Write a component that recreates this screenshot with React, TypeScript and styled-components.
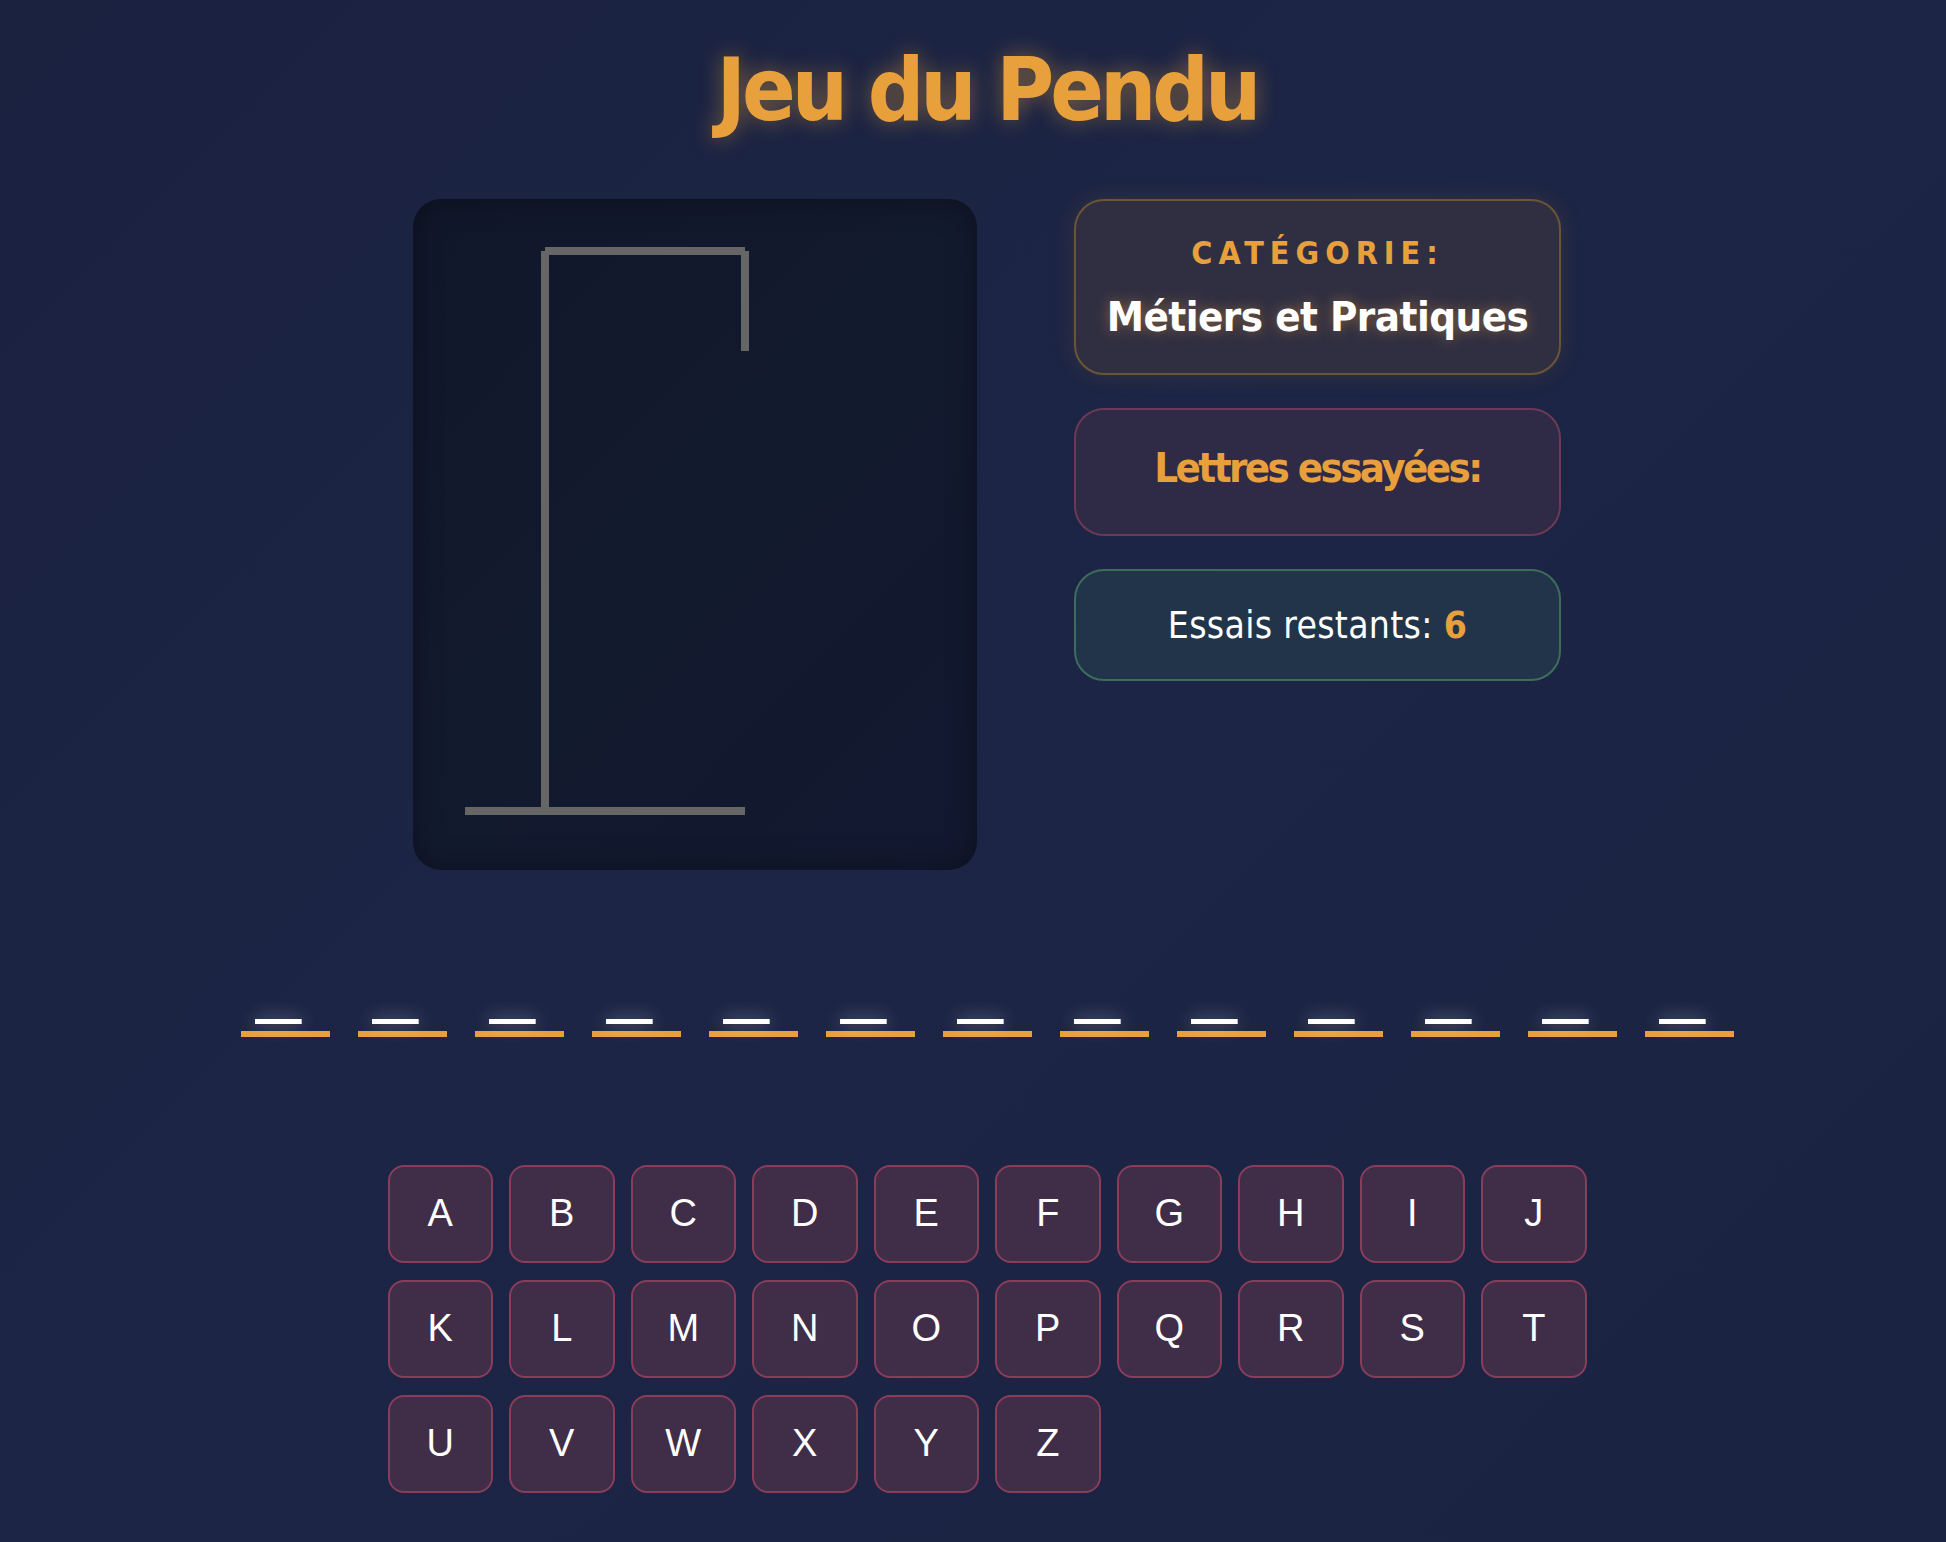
import React from "react";
import styled, { createGlobalStyle } from "styled-components";

const GlobalStyle = createGlobalStyle`
    html, body {
        margin: 0;
        padding: 0;
    }
    body {
        min-height: 100vh;
        background: linear-gradient(135deg, #1b2240 0%, #1c2545 45%, #1a2341 100%);
        font-family: "DejaVu Sans Condensed", "DejaVu Sans", sans-serif;
        color: #ffffff;
    }
`

const ORANGE = "#e8a03c";

const word = "_____________".split("");
const alphabet = "ABCDEFGHIJKLMNOPQRSTUVWXYZ".split("");

type CardTone = "orange" | "rose" | "green";

export default function App() {
    return (
        <>
            <GlobalStyle/>
            <Page>
                <Title>Jeu du Pendu</Title>
                <GameArea>
                    <Gallows>
                        <svg width="500" height="600" viewBox="0 0 250 300">
                            <line x1="10" y1="290" x2="150" y2="290"/>
                            <line x1="50" y1="290" x2="50" y2="10"/>
                            <line x1="50" y1="10" x2="150" y2="10"/>
                            <line x1="150" y1="10" x2="150" y2="60"/>
                        </svg>
                    </Gallows>
                    <InfoColumn>
                        <InfoCard $tone="orange">
                            <CategoryLabel>Catégorie:</CategoryLabel>
                            <CategoryValue>Métiers et Pratiques</CategoryValue>
                        </InfoCard>
                        <InfoCard $tone="rose" $extraBottom={10}>
                            <TriedTitle>Lettres essayées:</TriedTitle>
                        </InfoCard>
                        <InfoCard $tone="green">
                            <Remaining>Essais restants: <strong>6</strong></Remaining>
                        </InfoCard>
                    </InfoColumn>
                </GameArea>
                <WordRow>
                    {word.map((c, i) => (
                        <Blank key={i}>{c}</Blank>
                    ))}
                </WordRow>
                <Keyboard>
                    {alphabet.map((l) => (
                        <Key key={l}>{l}</Key>
                    ))}
                </Keyboard>
            </Page>
        </>
    );
}

const Page = styled.div`
    display: flex;
    flex-direction: column;
    align-items: center;
    padding: 0 0 40px 28px;
`

const Title = styled.h1`
    margin: 37px 0 56px;
    font-size: 88px;
    line-height: 1.2;
    font-weight: bold;
    letter-spacing: -4px;
    color: ${ORANGE};
    text-shadow: 0 0 22px rgba(232, 160, 60, 0.45);
`

const GameArea = styled.div`
    display: flex;
    align-items: flex-start;
    gap: 97px;
`

const Gallows = styled.div`
    width: 564px;
    height: 671px;
    box-sizing: border-box;
    padding: 32px;
    border-radius: 28px;
    background: linear-gradient(135deg, #11172a 0%, #121a2e 50%, #121830 100%);
    box-shadow: inset 0 0 30px rgba(0, 0, 0, 0.35);

    svg {
        display: block;
    }

    line {
        stroke: #666666;
        stroke-width: 4;
        stroke-linecap: butt;
    }
`

const InfoColumn = styled.div`
    width: 487px;
    display: flex;
    flex-direction: column;
    gap: 33px;
`

const tones = {
    orange: {bg: "#302f42", border: "#6b5536", glow: "rgba(232, 160, 60, 0.12)"},
    rose: {bg: "#2f2a45", border: "#6c3a56", glow: "rgba(0, 0, 0, 0)"},
    green: {bg: "#22344a", border: "#3d6e5b", glow: "rgba(0, 0, 0, 0)"},
};

const InfoCard = styled.div<{ $tone: CardTone; $extraBottom?: number }>`
    box-sizing: border-box;
    padding: 33px 20px ${(p) => 31 + (p.$extraBottom || 0)}px;
    border: 2px solid ${(p) => tones[p.$tone].border};
    border-radius: 30px;
    background: ${(p) => tones[p.$tone].bg};
    box-shadow: 0 0 24px ${(p) => tones[p.$tone].glow};
    text-align: center;
`

const CategoryLabel = styled.div`
    font-size: 32px;
    line-height: 1.2;
    font-weight: bold;
    letter-spacing: 6px;
    text-transform: uppercase;
    color: ${ORANGE};
`

const CategoryValue = styled.div`
    margin-top: 20px;
    font-size: 41.6px;
    line-height: 1.2;
    font-weight: bold;
    letter-spacing: -0.5px;
    white-space: nowrap;
    color: #ffffff;
    text-shadow: 0 0 14px rgba(232, 160, 60, 0.45);
`

const TriedTitle = styled.div`
    font-size: 41.6px;
    line-height: 1.2;
    font-weight: bold;
    letter-spacing: -2.6px;
    color: ${ORANGE};
`

const Remaining = styled.div`
    font-size: 37px;
    line-height: 1.2;
    letter-spacing: 0.3px;
    color: #ffffff;

    strong {
        color: ${ORANGE};
    }
`

const WordRow = styled.div`
    margin-top: 61px;
    display: flex;
    gap: 28px;
`

const Blank = styled.span`
    width: 89px;
    line-height: 100px;
    text-align: center;
    font-family: "Liberation Sans", Arial, sans-serif;
    font-size: 80px;
    letter-spacing: 13px;
    color: #ffffff;
    text-shadow: 0 0 18px rgba(255, 255, 255, 0.45);
    border-bottom: 6px solid ${ORANGE};
`

const Keyboard = styled.div`
    margin-top: 128px;
    width: 1199px;
    display: grid;
    grid-template-columns: repeat(10, 1fr);
    grid-auto-rows: 98px;
    column-gap: 16px;
    row-gap: 17px;
`

const Key = styled.button`
    box-sizing: border-box;
    margin: 0;
    padding: 0;
    border: 2px solid #8a3d5a;
    border-radius: 16px;
    background: #402d48;
    color: #ffffff;
    font-family: "Liberation Sans", Arial, sans-serif;
    font-size: 38px;
    cursor: pointer;
`
